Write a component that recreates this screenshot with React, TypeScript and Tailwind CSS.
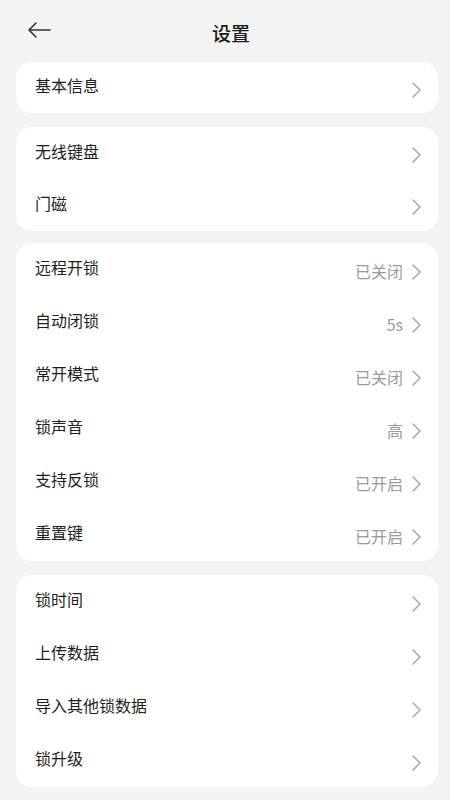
import React from "react";

type Row = { label: string; value?: string };

const groups: { rows: Row[]; h: string; mt: string }[] = [
  { rows: [{ label: "基本信息" }], h: "h-[51px]", mt: "mt-0" },
  { rows: [{ label: "无线键盘" }, { label: "门磁" }], h: "h-[52px]", mt: "mt-[14px]" },
  {
    rows: [
      { label: "远程开锁", value: "已关闭" },
      { label: "自动闭锁", value: "5s" },
      { label: "常开模式", value: "已关闭" },
      { label: "锁声音", value: "高" },
      { label: "支持反锁", value: "已开启" },
      { label: "重置键", value: "已开启" },
    ],
    h: "h-[53px]",
    mt: "mt-[12px]",
  },
  {
    rows: [
      { label: "锁时间" },
      { label: "上传数据" },
      { label: "导入其他锁数据" },
      { label: "锁升级" },
    ],
    h: "h-[53px]",
    mt: "mt-[14px]",
  },
];

function Chevron() {
  return (
    <svg width="11" height="18" viewBox="0 0 11 18" fill="none" className="mt-[4px]">
      <path d="M2 2 L9 9 L2 16" stroke="#a8a8a8" strokeWidth="1.6" strokeLinecap="round" strokeLinejoin="round" />
    </svg>
  );
}

export default function App() {
  return (
    <div
      className="w-[450px] h-[800px] overflow-hidden bg-[#f3f3f3]"
      style={{ fontFamily: '"Noto Sans CJK SC", "Noto Sans", sans-serif' }}
    >
      <div className="relative h-[62px] flex items-center justify-center">
        <div className="absolute left-[26px] top-[20px]">
          <svg width="26" height="20" viewBox="0 0 26 20" fill="none">
            <path d="M24 10 H3 M10 3 L3 10 L10 17" stroke="#333" strokeWidth="1.6" strokeLinecap="round" strokeLinejoin="round" />
          </svg>
        </div>
        <div className="text-[19px] font-medium text-[#1c1c1c] mt-[4px] ml-[12px]">设置</div>
      </div>
      <div className="flex flex-col pl-[16px] pr-[12px]">
        {groups.map((g, gi) => (
          <div key={gi} className={`bg-white rounded-[16px] ${g.mt}`}>
            {g.rows.map((r) => (
              <div key={r.label} className={`${g.h} flex items-center pl-[19px] pr-[16px]`}>
                <span className="flex-1 text-[16px] text-[#1e1e1e] mb-[5px]">{r.label}</span>
                {r.value && (
                  <span className="text-[16px] text-[#9a9a9a] mr-[8px] mt-[3px]">{r.value}</span>
                )}
                <Chevron />
              </div>
            ))}
          </div>
        ))}
      </div>
    </div>
  );
}
